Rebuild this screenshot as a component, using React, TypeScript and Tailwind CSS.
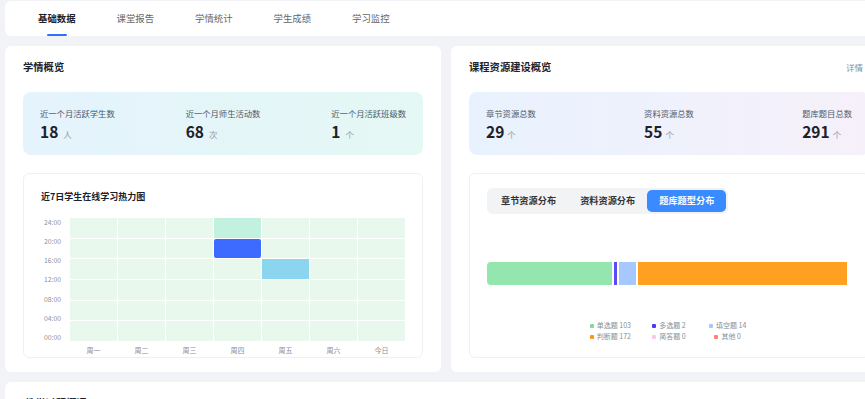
import * as React from "react";

const tabs = ["基础数据", "课堂报告", "学情统计", "学生成绩", "学习监控"];

const studyStats = [
  { label: "近一个月活跃学生数", value: "18", unit: "人" },
  { label: "近一个月师生活动数", value: "68", unit: "次" },
  { label: "近一个月活跃班级数", value: "1", unit: "个" },
];

const resourceStats = [
  { label: "章节资源总数", value: "29", unit: "个" },
  { label: "资料资源总数", value: "55", unit: "个" },
  { label: "题库题目总数", value: "291", unit: "个" },
];

const yLabels = ["24:00", "20:00", "16:00", "12:00", "08:00", "04:00", "00:00"];
const days = ["周一", "周二", "周三", "周四", "周五", "周六", "今日"];

// top row first (24:00 - 20:00)
function cellColor(row: number, col: number) {
  if (row === 0 && col === 3) return "bg-[#c3f1e0]";
  if (row === 1 && col === 3) return "bg-[#3d6bff] rounded-[2px]";
  if (row === 2 && col === 4) return "bg-[#8bd5ee]";
  return "bg-[#e8f8ec]";
}

const barSegments = [
  { value: 103, color: "#93e6ae" },
  { value: 2, color: "#5a4cf4" },
  { value: 14, color: "#a7c8ff" },
  { value: 172, color: "#ffa021" },
];

const legend = [
  { color: "bg-[#7edc98]", text: "单选题 103" },
  { color: "bg-[#4b3df5]", text: "多选题 2" },
  { color: "bg-[#a6c6ff]", text: "填空题 14" },
  { color: "bg-[#ff9518]", text: "判断题 172" },
  { color: "bg-[#ffc4e7]", text: "简答题 0" },
  { color: "bg-[#ff8273]", text: "其他 0" },
];

function StatBox({
  stats,
  className,
  gap,
}: {
  stats: { label: string; value: string; unit: string }[];
  className: string;
  gap: string;
}) {
  return (
    <div className={`h-[63px] rounded-[8px] px-[17px] flex items-center justify-between ${className}`}>
      {stats.map((s) => (
        <div key={s.label} className="flex flex-col">
          <span className="text-[8.3px] leading-[12px] text-[#4e5969]">{s.label}</span>
          <div className="flex items-baseline mt-[2px]">
            <span className="text-[15.5px] leading-[20px] font-bold text-[#1d2129]">{s.value}</span>
            <span className={`text-[8.5px] text-[#999] ${gap}`}>{s.unit}</span>
          </div>
        </div>
      ))}
    </div>
  );
}

function Heatmap() {
  return (
    <div className="mt-[18px] h-[185px] rounded-[6px] border border-[#eef0f3] bg-white px-[17px] pt-[17px]">
      <div className="text-[9px] leading-[12px] font-bold text-[#1d2129]">近7日学生在线学习热力图</div>
      <div className="flex mt-[15px]">
        <div className="w-[29px] h-[123px] pr-[9px] flex flex-col justify-between text-right text-[6.8px] leading-[8px] text-[#8a8f99] py-[0px]">
          {yLabels.map((l) => (
            <span key={l}>{l}</span>
          ))}
        </div>
        <div className="flex flex-col">
          <div className="grid grid-cols-[repeat(7,47px)] grid-rows-[repeat(6,19.67px)] gap-[1px]">
            {Array.from({ length: 6 }).map((_, r) =>
              days.map((d, c) => <div key={`${r}-${d}`} className={cellColor(r, c)} />)
            )}
          </div>
          <div className="grid grid-cols-[repeat(7,47px)] gap-[1px] mt-[3px]">
            {days.map((d) => (
              <span key={d} className="text-center text-[7px] leading-[12px] text-[#8a8f99]">
                {d}
              </span>
            ))}
          </div>
        </div>
      </div>
    </div>
  );
}

function Distribution() {
  const total = barSegments.reduce((a, b) => a + b.value, 0);
  return (
    <div className="mt-[18px] h-[185px] rounded-[6px] border border-[#eef0f3] bg-white px-[17px] pt-[14px] flex flex-col">
      <div className="self-start h-[26px] rounded-[6px] bg-[#f2f3f5] p-[2px] flex text-[9.2px] font-bold">
        <div className="px-[12px] flex items-center text-[#333]">章节资源分布</div>
        <div className="px-[12px] flex items-center text-[#333]">资料资源分布</div>
        <div className="px-[12px] flex items-center rounded-[5px] bg-[#3a8bff] text-white">题库题型分布</div>
      </div>
      <div className="mt-[48px] w-[360px] h-[23px] flex gap-[2px] rounded-l-[4px] overflow-hidden">
        {barSegments.map((s) => (
          <div
            key={s.color}
            className="h-full"
            style={{ flexGrow: s.value / total, flexBasis: 0, backgroundColor: s.color }}
          />
        ))}
      </div>
      <div className="mt-[35px] self-center grid grid-cols-[repeat(3,58.7px)] text-[7px] leading-[11.4px] text-[#86909c]">
        {legend.map((l) => (
          <div key={l.text} className="flex items-center justify-center gap-[3px]">
            <span className={`w-[4px] h-[4px] rounded-[1px] ${l.color}`} />
            <span>{l.text}</span>
          </div>
        ))}
      </div>
    </div>
  );
}

export default function App() {
  return (
    <div className="w-[865px] h-[399px] overflow-hidden bg-[#f2f3f7] font-['Noto_Sans_CJK_SC','Noto_Sans',sans-serif]">
      <div className="w-[897px] pl-[5px] pt-[1px] flex flex-col">
        {/* tabs */}
        <div className="h-[35px] bg-white rounded-[6px] pl-[33px] flex gap-[41px]">
          {tabs.map((t, i) => (
            <div key={t} className="relative h-full flex items-center">
              <span className={`text-[9.4px] ${i === 0 ? "font-bold text-[#1d2129]" : "text-[#666]"}`}>{t}</span>
              {i === 0 && (
                <span className="absolute bottom-0 left-1/2 -translate-x-1/2 w-[20px] h-[2px] rounded-full bg-[#3370ff]" />
              )}
            </div>
          ))}
        </div>

        <div className="mt-[10px] flex gap-[10px]">
          {/* 学情概览 */}
          <div className="w-[436px] h-[326px] bg-white rounded-[6px] px-[18px] pt-[14px]">
            <div className="h-[14px] flex items-center text-[10.3px] font-bold text-[#1d2129]">学情概览</div>
            <div className="mt-[18px]">
              <StatBox stats={studyStats} className="bg-gradient-to-r from-[#e5f3fd] to-[#e4f8f4]" gap="ml-[5px]" />
            </div>
            <Heatmap />
          </div>

          {/* 课程资源建设概览 */}
          <div className="w-[436px] h-[326px] bg-white rounded-[6px] px-[18px] pt-[14px]">
            <div className="h-[14px] flex items-center justify-between">
              <span className="text-[10.3px] font-bold text-[#1d2129]">课程资源建设概览</span>
              <span className="mr-[6px] text-[8.5px] text-[#86909c]">详情</span>
            </div>
            <div className="mt-[18px]">
              <StatBox stats={resourceStats} className="bg-gradient-to-r from-[#e8f2fe] to-[#f6f0fa]" gap="ml-[3px]" />
            </div>
            <Distribution />
          </div>
        </div>

        <div className="mt-[10px] h-[120px] bg-white rounded-[6px] px-[20px] pt-[14px]">
          <div className="h-[14px] flex items-center text-[10.3px] font-bold text-[#1d2129]">教学过程概况</div>
        </div>
      </div>
    </div>
  );
}
